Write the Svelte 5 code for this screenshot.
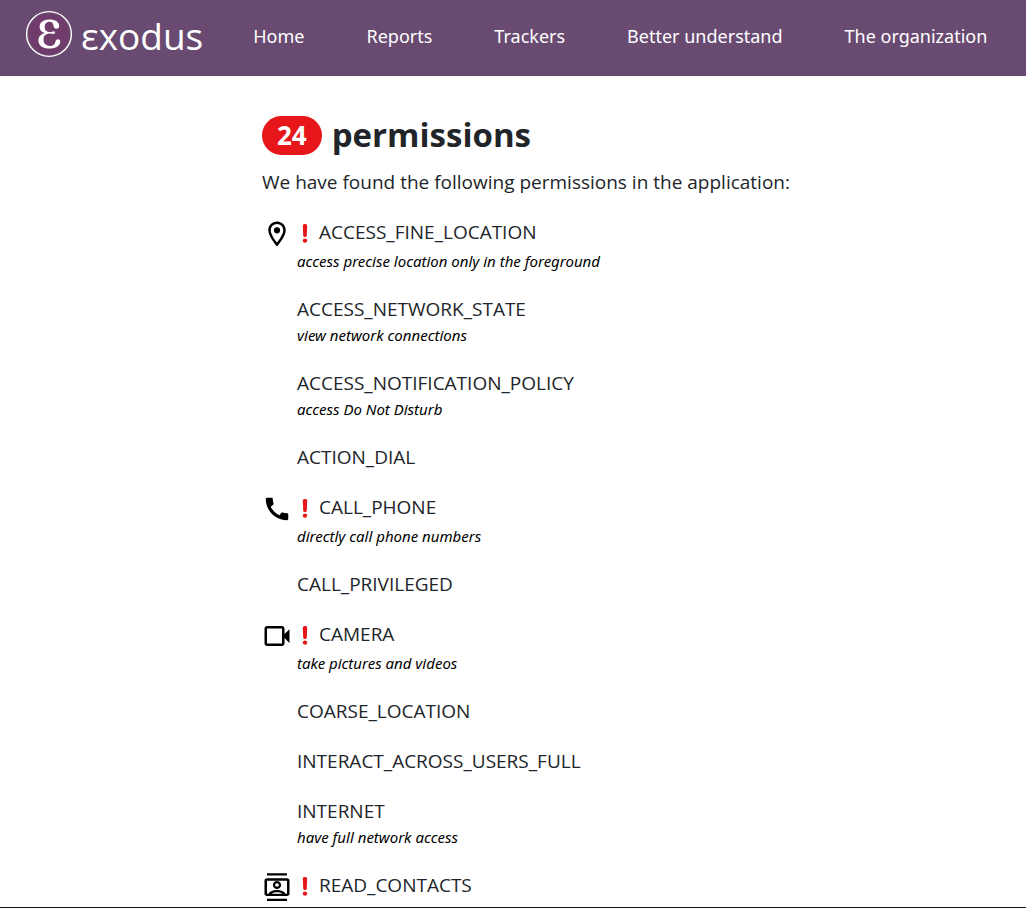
<script>
  const links = ['Home', 'Reports', 'Trackers', 'Better understand', 'The organization'];

  const permissions = [
    { name: 'ACCESS_FINE_LOCATION', text: 'access precise location only in the foreground', icon: 'location' },
    { name: 'ACCESS_NETWORK_STATE', text: 'view network connections' },
    { name: 'ACCESS_NOTIFICATION_POLICY', text: 'access Do Not Disturb' },
    { name: 'ACTION_DIAL' },
    { name: 'CALL_PHONE', text: 'directly call phone numbers', icon: 'phone' },
    { name: 'CALL_PRIVILEGED' },
    { name: 'CAMERA', text: 'take pictures and videos', icon: 'camera' },
    { name: 'COARSE_LOCATION' },
    { name: 'INTERACT_ACROSS_USERS_FULL' },
    { name: 'INTERNET', text: 'have full network access' },
    { name: 'READ_CONTACTS', icon: 'contacts' }
  ];

  const icons = {
    location:
      'M12 2C8.13 2 5 5.13 5 9c0 5.25 7 13 7 13s7-7.75 7-13c0-3.87-3.13-7-7-7zM7 9c0-2.76 2.24-5 5-5s5 2.24 5 5c0 2.88-2.88 7.19-5 9.88C9.92 16.21 7 11.85 7 9z M14.5 9a2.5 2.5 0 1 1-5 0 2.5 2.5 0 0 1 5 0z',
    phone:
      'M20.01 15.38c-1.23 0-2.42-.2-3.53-.56-.35-.12-.74-.03-1.01.24l-1.57 1.97c-2.83-1.35-5.48-3.9-6.89-6.83l1.95-1.66c.27-.28.35-.67.24-1.02-.37-1.11-.56-2.3-.56-3.53 0-.54-.45-.99-.99-.99H4.19C3.65 3 3 3.24 3 3.99 3 13.28 10.73 21 20.01 21c.71 0 .99-.63.99-1.18v-3.45c0-.54-.45-.99-.99-.99z',
    camera:
      'M18 10.48V6c0-1.1-.9-2-2-2H4c-1.1 0-2 .9-2 2v12c0 1.1.9 2 2 2h12c1.1 0 2-.9 2-2v-4.480l4 3.980v-11l-4 3.980zM16 18H4V6h12v12z',
    contacts:
      'M20 5H4c-1.100 0-2 .8-2 1.800v10.600c0 1 .9 1.800 2 1.800h16c1.100 0 2-.8 2-1.800V6.800C22 5.800 21.100 5 20 5zM20 17.300h-1.200c-1-1.800-4-2.900-6.800-2.900s-5.800 1.100-6.800 2.900H4V6.900h16zM16.200 17.300H7.800c1-.7 2.600-1.100 4.200-1.100s3.200.4 4.200 1.100zM4 1h16v1.800H4zM4 21.400h16v1.800H4zM12 13.600c1.900 0 3.300-1.400 3.300-3.200S13.900 7.200 12 7.200s-3.300 1.400-3.300 3.200 1.400 3.200 3.300 3.200zM12 9c.8 0 1.500.6 1.500 1.400s-.7 1.400-1.500 1.400-1.500-.6-1.500-1.400S11.200 9 12 9z'
  };
</script>

<div class="page">
  <header>
    <a class="brand" href="#home">
      <svg viewBox="0 0 48 48" aria-hidden="true">
        <circle cx="24" cy="24" r="22.4" fill="none" stroke="#fff" stroke-width="1.4" />
        <circle cx="24" cy="24" r="20.5" fill="#6f3c6c" />
        <path
          fill="#fff"
          d="M34.200 15.800c0 1.800-1.100 3-2.800 3s-2.700-1.100-2.900-3c-.3-2.500-1.500-4-3.900-4-3.100 0-4.900 2.100-4.900 5.200 0 3.200 2 5.100 5.600 5.100 1.200 0 2.300-.9 3.300-.9.9 0 1.400.6 1.400 1.400s-.5 1.400-1.400 1.400c-1 0-2-.6-3.400-.6-4.500 0-6.700 2.300-6.700 6.200 0 4 2.500 6.300 6.600 6.300 2.900 0 4.500-1.200 5-3.200.5-2.100 1.200-3.400 2.800-3.400 1.500 0 2.500 1 2.300 2.800-.4 4-4.400 6.500-10.700 6.500-6.900 0-11.100-3.100-11.100-8.100 0-3.700 2.300-6.400 6.600-7.500-3.600-1-5.400-3.100-5.400-6.100 0-4.500 3.900-7.400 9.800-7.400 5.900 0 9.800 2.600 9.800 6.300z"
        />
      </svg>
      <span>εxodus</span>
    </a>
    <nav>
      {#each links as link}
        <a href="#{link.toLowerCase().replaceAll(' ', '-')}">{link}</a>
      {/each}
    </nav>
  </header>

  <main>
    <h1><span class="badge">24</span>permissions</h1>
    <p>We have found the following permissions in the application:</p>
    <ul>
      {#each permissions as item}
        <li class:special={item.icon}>
          {#if item.icon}
            <svg class="icon" viewBox="0 0 24 24" aria-hidden="true">
              <path fill-rule="evenodd" d={icons[item.icon]} />
            </svg>
          {/if}
          <div>
            <div class="name">
              {#if item.icon}
                <svg class="alert" viewBox="0 0 6 20" aria-hidden="true">
                  <path d="M2.500 0h1Q5.300 0 5.200 1.800L4.800 11.500q-.1 1.500-1.500 1.500h-.6q-1.400 0-1.500-1.500L.8 1.800Q.7 0 2.500 0z" />
                  <circle cx="3" cy="16.600" r="2.200" />
                </svg>
              {/if}
              <span>{item.name}</span>
            </div>
            {#if item.text}<p>{item.text}</p>{/if}
          </div>
        </li>
      {/each}
    </ul>
  </main>
</div>

<style>
  :global(body) {
    margin: 0;
    background: #fff;
  }
  .page {
    box-sizing: border-box;
    min-height: 100vh;
    border-bottom: 1px solid #111;
    color: #212529;
    font-family: 'Segoe UI', 'Open Sans', 'Noto Sans', sans-serif;
    font-size: 19px;
    line-height: 30px;
  }
  header {
    display: flex;
    align-items: center;
    gap: 50px;
    box-sizing: border-box;
    min-height: 76px;
    padding: 0 24px 4px 25px;
    background: #694a71;
  }
  header a {
    color: #fff;
    text-decoration: none;
    white-space: nowrap;
  }
  .brand {
    display: flex;
    align-items: center;
    gap: 8px;
    font-size: 37px;
    line-height: 60px;
  }
  .brand svg {
    width: 48px;
    height: 48px;
    margin-bottom: 4px;
  }
  nav {
    display: flex;
    gap: 62px;
    font-family: 'Segoe UI', 'Noto Sans', sans-serif;
    font-size: 18px;
  }
  main {
    padding: 36px 24px 0 262px;
  }
  h1 {
    display: flex;
    align-items: center;
    gap: 10px;
    margin: 0 0 9px;
    font-size: 33px;
    font-weight: 700;
    line-height: 46px;
  }
  .badge {
    padding: 0 15px;
    border-radius: 20px;
    background: #e6161a;
    color: #fff;
    font-size: 26px;
    line-height: 39px;
  }
  p {
    margin: 0;
  }
  ul {
    display: flex;
    flex-direction: column;
    gap: 20px;
    margin: 20px 0 0;
    padding: 0;
    list-style: none;
  }
  li {
    display: flex;
    padding-left: 35px;
  }
  .special {
    gap: 5px;
    padding-left: 0;
  }
  .icon {
    width: 30px;
    height: 30px;
    margin-top: 2px;
  }
  .special .name {
    padding-bottom: 3px;
  }
  .name {
    display: flex;
    align-items: center;
  }
  .alert {
    width: 6px;
    height: 20px;
    margin: 4px 11px 0 5px;
    fill: #e6161a;
  }
  li p {
    padding-bottom: 1px;
    color: #000;
    font-family: 'Segoe UI', 'Noto Sans', sans-serif;
    font-size: 15px;
    font-style: italic;
    line-height: 23px;
  }
</style>
